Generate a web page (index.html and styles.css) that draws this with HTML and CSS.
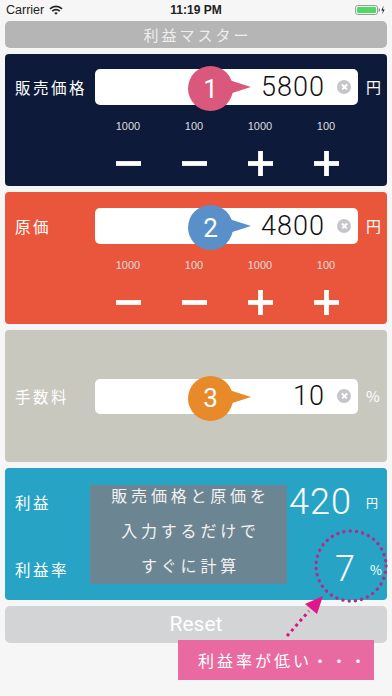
FILE: index.html
```html
<!DOCTYPE html>
<html lang="ja">
<head>
<meta charset="utf-8">
<title>利益マスター</title>
<link rel="stylesheet" href="styles.css">
</head>
<body>
<div class="status">
  <div class="carrier">Carrier
    <svg class="wifi" width="14" height="10" viewBox="0 0 14 10"><path d="M1 3.9 A8.6 8.6 0 0 1 13 3.9" fill="none" stroke="#222" stroke-width="1.7"/><path d="M3.3 6.1 A5.3 5.3 0 0 1 10.7 6.1" fill="none" stroke="#222" stroke-width="1.7"/><path d="M7 9.8 L5.2 8 A2.6 2.6 0 0 1 8.8 8 Z" fill="#222"/></svg>
  </div>
  <div class="time">11:19 PM</div>
  <div class="batt">
    <svg width="30" height="10" viewBox="0 0 30 10"><rect x="0.5" y="0.5" width="22" height="9" rx="2.2" fill="none" stroke="#9a9a9a"/><rect x="2" y="2" width="19" height="6" rx="1" fill="#4cd964"/><rect x="23.5" y="3.5" width="1.5" height="3" fill="#9a9a9a"/><path d="M28.6 0.8 L26.3 5.4 H27.9 L27.2 9.2 L29.6 4.4 H28 Z" fill="#222"/></svg>
  </div>
</div>

<main class="app">
  <div class="title">利益マスター</div>

  <section class="panel navy">
    <div class="row">
      <div class="label">販売価格</div>
      <div class="field">
        <div class="badge pink">1</div>
        <span class="val">5800</span>
        <span class="clear"></span>
      </div>
      <div class="unit">円</div>
    </div>
    <div class="steps">
      <div class="step"><span class="amt">1000</span><svg class="op" viewBox="0 0 26 26"><rect x="0" y="10.5" width="26" height="5" fill="#fff"/></svg></div>
      <div class="step"><span class="amt">100</span><svg class="op" viewBox="0 0 26 26"><rect x="0" y="10.5" width="26" height="5" fill="#fff"/></svg></div>
      <div class="step"><span class="amt">1000</span><svg class="op" viewBox="0 0 26 26"><rect x="0" y="10.5" width="26" height="5" fill="#fff"/><rect x="10.5" y="0" width="5" height="26" fill="#fff"/></svg></div>
      <div class="step"><span class="amt">100</span><svg class="op" viewBox="0 0 26 26"><rect x="0" y="10.5" width="26" height="5" fill="#fff"/><rect x="10.5" y="0" width="5" height="26" fill="#fff"/></svg></div>
    </div>
  </section>

  <section class="panel orange">
    <div class="row">
      <div class="label">原価</div>
      <div class="field">
        <div class="badge blue">2</div>
        <span class="val">4800</span>
        <span class="clear"></span>
      </div>
      <div class="unit">円</div>
    </div>
    <div class="steps">
      <div class="step"><span class="amt">1000</span><svg class="op" viewBox="0 0 26 26"><rect x="0" y="10.5" width="26" height="5" fill="#fff"/></svg></div>
      <div class="step"><span class="amt">100</span><svg class="op" viewBox="0 0 26 26"><rect x="0" y="10.5" width="26" height="5" fill="#fff"/></svg></div>
      <div class="step"><span class="amt">1000</span><svg class="op" viewBox="0 0 26 26"><rect x="0" y="10.5" width="26" height="5" fill="#fff"/><rect x="10.5" y="0" width="5" height="26" fill="#fff"/></svg></div>
      <div class="step"><span class="amt">100</span><svg class="op" viewBox="0 0 26 26"><rect x="0" y="10.5" width="26" height="5" fill="#fff"/><rect x="10.5" y="0" width="5" height="26" fill="#fff"/></svg></div>
    </div>
  </section>

  <section class="panel gray">
    <div class="row">
      <div class="label">手数料</div>
      <div class="field">
        <div class="badge amber">3</div>
        <span class="val">10</span>
        <span class="clear"></span>
      </div>
      <div class="unit">%</div>
    </div>
  </section>

  <section class="panel cyan">
    <div class="res">
      <div class="label">利益</div>
      <span class="big v1">420</span>
      <span class="sunit">円</span>
    </div>
    <div class="res">
      <div class="label">利益率</div>
      <span class="big v2">7</span>
      <span class="sunit pct">%</span>
    </div>
    <div class="tip">
      <p>販売価格と原価を<br>入力するだけで<br>すぐに計算</p>
    </div>
  </section>

  <div class="reset">Reset</div>
</main>

<svg class="annot" width="392" height="696" viewBox="0 0 392 696">
  <circle cx="351" cy="566" r="35" fill="none" stroke="#a8308f" stroke-width="3.4" stroke-linecap="round" stroke-dasharray="0.1 6.2"/>
  <line x1="287" y1="636" x2="309" y2="611" stroke="#d8167f" stroke-width="3" stroke-dasharray="3 3.5"/>
  <polygon points="323,596 317,614 305,604" fill="#e0168a"/>
</svg>
<div class="callout">利益率が低い・・・</div>
</body>
</html>
```

FILE: styles.css
```css
* { box-sizing: border-box; }

body {
  margin: 0;
  width: 392px;
  height: 696px;
  background: #f7f6f7;
  font-family: "Noto Sans CJK JP", "Noto Sans", sans-serif;
  position: relative;
  overflow: hidden;
}

.status {
  height: 20px;
  display: flex;
  align-items: center;
  justify-content: space-between;
  padding: 0 7px 0 6px;
  font-family: "Liberation Sans", Arial, sans-serif;
  font-size: 12.5px;
  color: #222;
  position: relative;
}
.carrier { display: flex; align-items: center; gap: 5px; }
.time {
  position: absolute;
  left: 0;
  right: 0;
  text-align: center;
  font-weight: bold;
  font-size: 12px;
}
.batt { display: flex; align-items: center; }
.batt svg { display: block; }

.app {
  padding: 1px 5px 0;
  display: flex;
  flex-direction: column;
  gap: 6px;
}

.title {
  height: 27px;
  background: #b5b5b5;
  border-radius: 5px;
  color: #eeeeee;
  font-size: 15px;
  letter-spacing: 3px;
  padding-left: 3px;
  text-align: center;
  line-height: 27px;
}

.panel {
  height: 132px;
  border-radius: 4px;
  padding: 15px 0 0 10px;
  color: #fff;
  position: relative;
}
.navy { background: #0e1a3a; }
.orange { background: #e9563b; padding-top: 16px; }
.gray { background: #c8c8bf; padding-top: 0; display: flex; align-items: center; }
.cyan { background: #27a4c5; padding-top: 14px; display: flex; flex-direction: column; gap: 27px; }

.row { display: flex; align-items: center; width: 100%; }

.label {
  width: 80px;
  font-size: 15.5px;
  letter-spacing: 2.5px;
  line-height: 20px;
  white-space: nowrap;
}

.field {
  width: 263px;
  height: 36px;
  background: #fff;
  border-radius: 5px;
  position: relative;
  display: flex;
  align-items: center;
  justify-content: flex-end;
  padding-right: 7px;
}
.gray .field { height: 35px; }

.val {
  font-family: Roboto, "Liberation Sans", sans-serif;
  font-weight: 300;
  font-size: 27px;
  letter-spacing: 1px;
  color: #111;
  margin-right: 12px;
  line-height: 36px;
}

.clear {
  width: 14px;
  height: 14px;
  border-radius: 50%;
  background: #c6c6ca;
  position: relative;
}
.clear::before, .clear::after {
  content: "";
  position: absolute;
  left: 3.5px;
  top: 6.25px;
  width: 7px;
  height: 1.5px;
  background: #fff;
  transform: rotate(45deg);
}
.clear::after { transform: rotate(-45deg); }

.badge {
  position: absolute;
  left: 93px;
  top: -3px;
  width: 45px;
  height: 45px;
  border-radius: 50%;
  background: var(--c);
  color: #fff;
  display: flex;
  align-items: center;
  justify-content: center;
  font-family: Roboto, "Liberation Sans", sans-serif;
  font-size: 26px;
  line-height: 1;
}
.badge::after {
  content: "";
  position: absolute;
  left: 38px;
  top: 13px;
  border-left: 25px solid var(--c);
  border-top: 8px solid transparent;
  border-bottom: 8px solid transparent;
}
.pink { --c: #d9587b; }
.blue { --c: #5a90c9; }
.amber { --c: #e88a2a; }

.unit {
  width: 29px;
  padding-left: 8px;
  font-size: 15px;
  line-height: 20px;
}

.steps {
  display: flex;
  margin-left: 80px;
  margin-top: 14px;
}
.step {
  width: 66px;
  display: flex;
  flex-direction: column;
  align-items: center;
}
.amt {
  font-family: "Liberation Sans", Arial, sans-serif;
  font-size: 11px;
  line-height: 14px;
  color: #dcdcdc;
}
.op {
  width: 25px;
  height: 25px;
  margin-top: 18px;
  display: block;
}

.res {
  display: flex;
  align-items: center;
  height: 40px;
  position: relative;
}
.big {
  margin-left: auto;
  font-family: Roboto, "Liberation Sans", sans-serif;
  font-weight: 300;
  font-size: 36px;
  letter-spacing: 1px;
  line-height: 40px;
}
.v1 { margin-right: 6px; }
.v2 { margin-right: 2px; }
.sunit {
  width: 29px;
  padding-left: 8px;
  font-size: 12px;
}
.pct { padding-left: 12px; font-size: 13px; }

.tip {
  position: absolute;
  left: 85px;
  top: 17px;
  width: 197px;
  height: 99px;
  background: #6c8592;
}
.tip p {
  margin: -7px 0 0;
  padding-left: 4px;
  text-align: center;
  font-size: 16px;
  letter-spacing: 3.8px;
  line-height: 35px;
  color: #f2f2f2;
}

.reset {
  height: 37px;
  background: #d3d4d5;
  border-radius: 5px;
  color: #fff;
  font-family: Roboto, "Liberation Sans", sans-serif;
  font-size: 21px;
  text-align: center;
  line-height: 37px;
}

.annot {
  position: absolute;
  left: 0;
  top: 0;
  pointer-events: none;
}

.callout {
  position: absolute;
  left: 178px;
  top: 640px;
  width: 196px;
  height: 40px;
  background: #e96aa0;
  color: #fff;
  font-size: 16px;
  letter-spacing: 3px;
  line-height: 40px;
  padding-left: 20px;
  white-space: nowrap;
}
```
